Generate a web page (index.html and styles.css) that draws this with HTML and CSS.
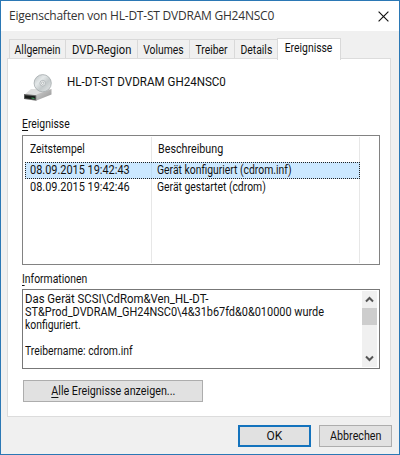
FILE: index.html
```
<!DOCTYPE html>
<html lang="de">
<head>
<meta charset="utf-8">
<title>Eigenschaften</title>
<link rel="stylesheet" href="styles.css">
</head>
<body>
<div class="window">
  <header class="titlebar">
    <span class="title">Eigenschaften von HL-DT-ST DVDRAM GH24NSC0</span>
    <svg class="close" width="11" height="11" viewBox="0 0 11 11"><path d="M.6.6l9.8 9.8M10.4.6L.6 10.4" stroke="#111" stroke-width="1.15"/></svg>
  </header>
  <nav class="tabs">
    <div class="tab general"><span class="t">Allgemein</span></div>
    <div class="tab region"><span class="t wide">DVD-Region</span></div>
    <div class="tab volumes"><span class="t">Volumes</span></div>
    <div class="tab driver"><span class="t">Treiber</span></div>
    <div class="tab details"><span class="t">Details</span></div>
    <div class="tab active"><span class="t">Ereignisse</span></div>
  </nav>
  <main class="panel">
    <div class="device">
      <svg width="30" height="29" viewBox="0 0 30 29">
        <defs>
          <linearGradient id="disc" x1="0" y1="0" x2="1" y2="1"><stop offset="0" stop-color="#b9bfc0"/><stop offset=".35" stop-color="#e4e8e9"/><stop offset=".6" stop-color="#c3c9ca"/><stop offset="1" stop-color="#e9eced"/></linearGradient>
          <linearGradient id="side" x1="0" y1="0" x2="1" y2="1"><stop offset="0" stop-color="#d2d2d2"/><stop offset="1" stop-color="#929292"/></linearGradient>
        </defs>
        <path d="M8 16h20.500l-14 6H1z" fill="#dedede"/>
        <path d="M28.500 16v5.500l-15 6v-6z" fill="url(#side)"/>
        <path d="M1 21l12.500 1.200v5.500L1 26z" fill="#666"/>
        <path d="M1.800 22.300l10.500 1v3.200L1.800 25.200z" fill="#191c1a"/>
        <path d="M8.500 24.600l3 .3v1l-3-.3z" fill="#3fa45b"/>
        <circle cx="19.700" cy="10.200" r="8.600" fill="url(#disc)" stroke="#a4abad" stroke-width=".8"/>
        <circle cx="19.700" cy="10.200" r="2.800" fill="#eef0f0" stroke="#aab0b2" stroke-width=".8"/>
        <circle cx="19.700" cy="10.200" r="1.200" fill="#fff" stroke="#8c9395" stroke-width=".6"/>
      </svg>
      <span class="t device-name">HL-DT-ST DVDRAM GH24NSC0</span>
    </div>
    <div class="label"><span class="t"><u>E</u>reignisse</span></div>
    <div class="list">
      <div class="row head"><div class="cell"><span class="t">Zeitstempel</span></div><div class="cell"><span class="t narrow">Beschreibung</span></div></div>
      <div class="row selected"><div class="cell"><span class="t mid">08.09.2015 19:42:43</span></div><div class="cell"><span class="t">Gerät konfiguriert (cdrom.inf)</span></div></div>
      <div class="row"><div class="cell"><span class="t mid">08.09.2015 19:42:46</span></div><div class="cell"><span class="t">Gerät gestartet (cdrom)</span></div></div>
      <div class="row filler"><div class="cell"></div><div class="cell"></div></div>
    </div>
    <div class="label info-label"><span class="t"><u>I</u>nformationen</span></div>
    <div class="info">
      <div class="info-text">
        <div class="line"><span class="t wide">Das Gerät SCSI\CdRom&amp;Ven_HL-DT-</span></div>
        <div class="line"><span class="t mid">ST&amp;Prod_DVDRAM_GH24NSC0\4&amp;31b67fd&amp;0&amp;010000 wurde</span></div>
        <div class="line"><span class="t">konfiguriert.</span></div>
        <div class="line"></div>
        <div class="line"><span class="t">Treibername: cdrom.inf</span></div>
      </div>
      <div class="scrollbar">
        <svg width="9" height="7" viewBox="0 0 9 7"><path d="M1 5.500L4.500 2 8 5.500" fill="none" stroke="#555" stroke-width="2"/></svg>
        <div class="thumb"></div>
        <svg class="down" width="9" height="7" viewBox="0 0 9 7"><path d="M1 1.500L4.500 5 8 1.500" fill="none" stroke="#555" stroke-width="2"/></svg>
      </div>
    </div>
    <div class="button all"><span class="t narrow"><u>A</u>lle Ereignisse anzeigen...</span></div>
  </main>
  <footer class="actions">
    <div class="button primary"><span>OK</span></div>
    <div class="button"><span class="t narrow">Abbrechen</span></div>
  </footer>
</div>
</body>
</html>
```
FILE: styles.css
```
* { box-sizing: border-box; }
body { margin: 0; font: 12px/13px Roboto, "Liberation Sans", sans-serif; color: #111; }
svg { display: block; flex: none; }
.window { width: 400px; height: 455px; background: #f0f0f0; border: 1px solid #2b78b5; display: flex; flex-direction: column; }
.titlebar { height: 30px; background: #fff; display: flex; align-items: center; justify-content: space-between; padding: 0 10px 0 8px; flex: none; }
.title { font: 12px/16px "Open Sans", sans-serif; letter-spacing: -.22px; color: #333; white-space: nowrap; }

/* Condensed UI text */
.t { display: inline-block; white-space: nowrap; transform: scaleX(.865); transform-origin: left; }
.t.narrow { transform: scaleX(.895); }
.t.mid { transform: scaleX(.91); }
.t.wide { transform: scaleX(.948); }
.tab .t, .button .t { transform-origin: center; }
u { text-decoration: none; display: inline-block; line-height: 12px; border-bottom: 1px solid #111; }

.tabs { display: flex; align-items: flex-end; height: 28px; padding-left: 8px; margin-bottom: -1px; flex: none; z-index: 1; }
.tab { height: 19px; border: 1px solid #d9d9d9; border-width: 1px 0 0 1px; margin-bottom: 1px; padding-top: 2px; display: flex; justify-content: center; align-items: center; }
.general { width: 56px; }
.region { width: 72px; }
.volumes { width: 52px; }
.driver { width: 45px; }
.details { width: 43px; }
.active { width: 64px; height: 22px; margin-bottom: -1px; background: #fff; border-width: 1px 1px 0; padding: 0 0 2px; }
.region .t.wide { transform: scaleX(.935); }

.panel { width: 384px; height: 359px; margin-left: 6px; border: 1px solid #dcdcdc; background: #fff; padding: 14px 11px 0 14px; flex: none; }
.device { display: flex; margin-left: 1px; height: 30px; }
.device-name { margin: 3px 0 0 14px; transform: scaleX(.965); height: 13px; }
.label { margin-top: 15px; height: 14px; }
.list { height: 130px; width: 358px; margin-top: 3px; border: 1px solid #828282; padding: 1px 18px 1px 2px; display: flex; flex-direction: column; }
.row { display: grid; grid-template-columns: 127px 1fr; height: 17px; flex: none; margin-right: 1px; }
.cell { border-right: 1px solid #e7e7e7; padding: 2px 0 0 5px; }
.head { height: 25px; }
.head .cell { padding-top: 6px; }
.head .cell + .cell { padding-left: 6px; }
.selected { background: #cce8ff; outline: 1px dotted #222; outline-offset: -1px; }
.selected .cell { border-color: #bfdcf2; }
.filler { flex: 1; }
.info-label { margin-top: 8px; }
.info { height: 80px; width: 358px; margin-top: 2px; border: 1px solid #777; padding: 1px 2px; display: flex; justify-content: space-between; }
.info-text { padding-top: 2px; }
.line { height: 13px; }
.scrollbar { width: 15px; background: #f0f0f0; display: flex; flex-direction: column; align-items: center; padding: 5px 0; }
.thumb { width: 15px; height: 17px; background: #cdcdcd; margin-top: 5px; }
.down { margin-top: auto; }

.button { width: 73px; height: 22px; border: 1px solid #adadad; background: #e1e1e1; display: flex; align-items: center; justify-content: center; }
.all { width: 180px; height: 22px; margin: 11px 0 0 1px; }
.actions { display: flex; justify-content: flex-end; gap: 8px; padding: 8px 7px 0 0; }
.primary { border: 2px solid #1473bd; }
```
